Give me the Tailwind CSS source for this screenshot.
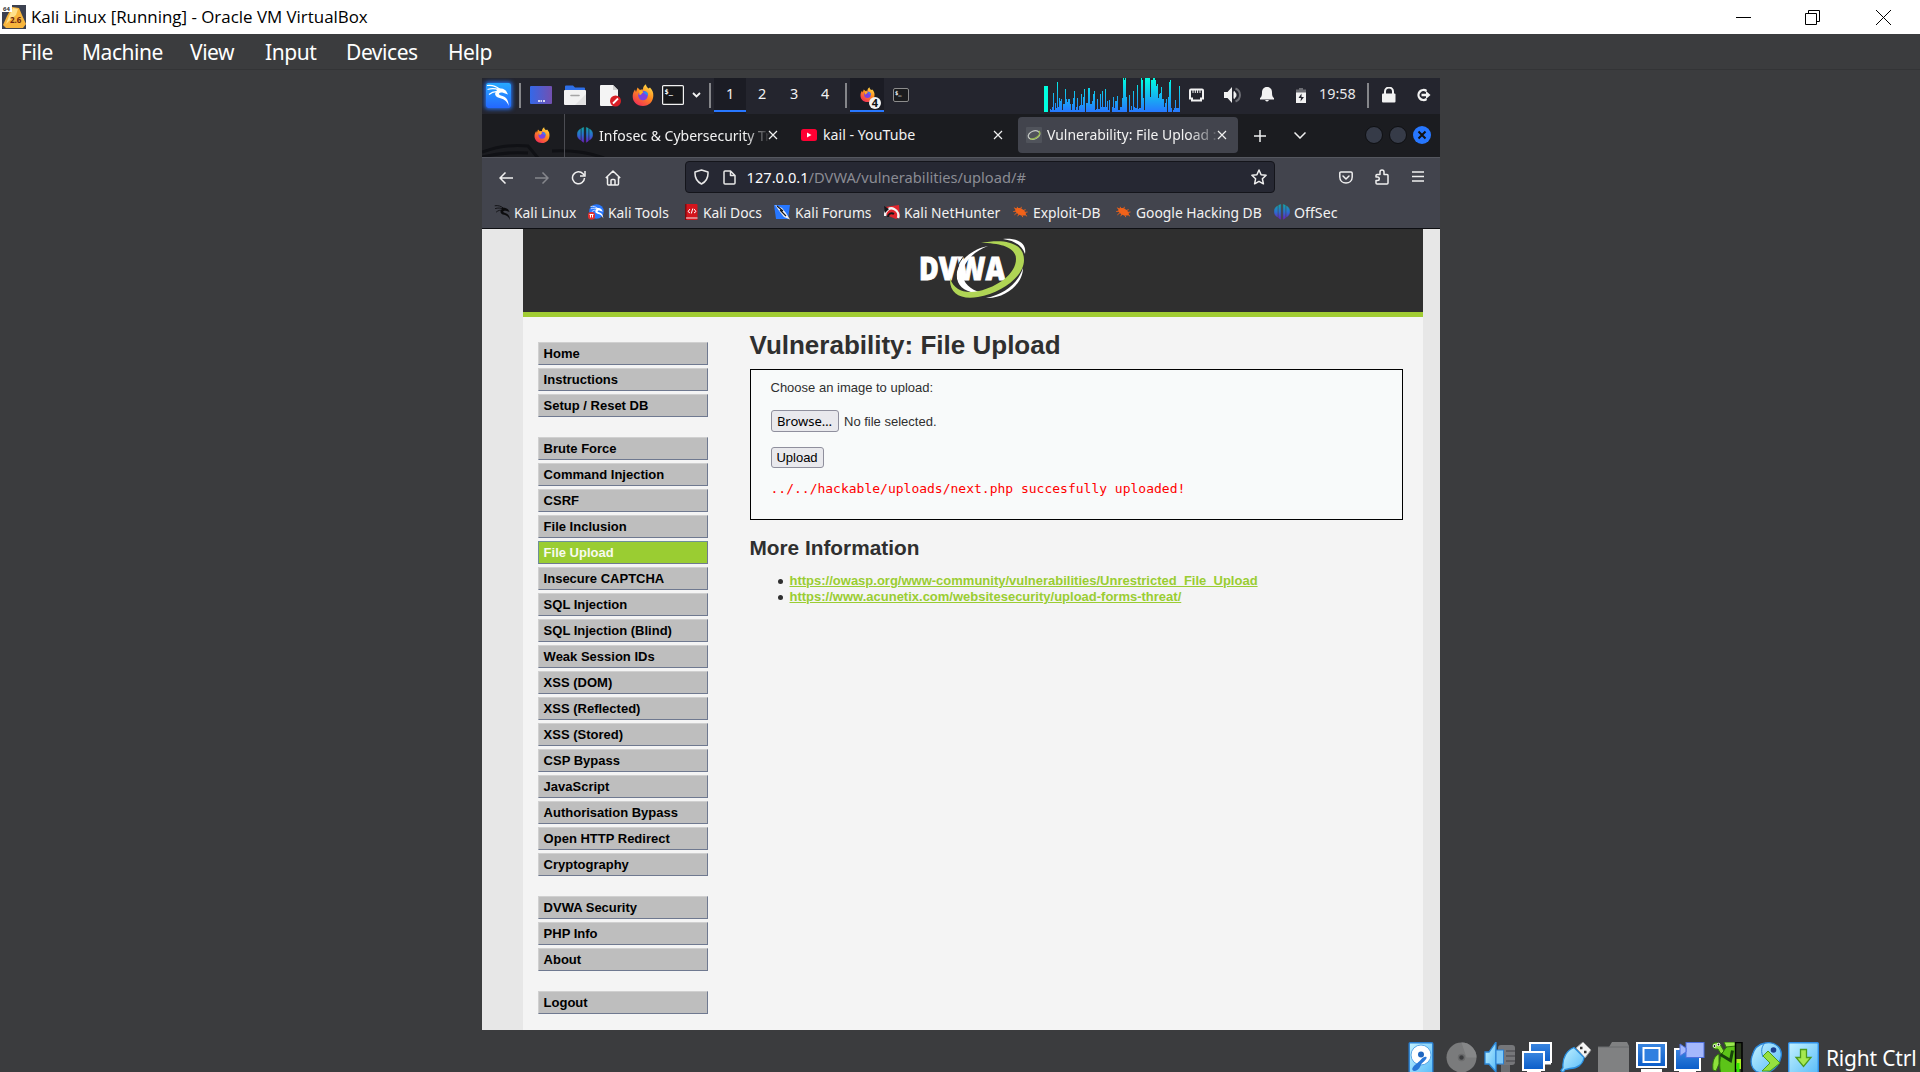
<!DOCTYPE html>
<html lang="en">
<head>
<meta charset="utf-8">
<title>Kali Linux [Running] - Oracle VM VirtualBox</title>
<script src="https://cdn.jsdelivr.net/npm/@tailwindcss/browser@4"></script>
</head>
<body class="bg-[#3b3c3e] w-[1920px] h-[1072px] overflow-hidden flex flex-col">

<svg width="0" height="0" class="absolute">
  <defs>
    <linearGradient id="fx" x1="0.8" y1="0" x2="0.2" y2="1"><stop offset="0" stop-color="#ffe14a"/><stop offset=".45" stop-color="#ff8a1e"/><stop offset="1" stop-color="#f0285a"/></linearGradient>
    <linearGradient id="off" x1="0" y1="0" x2="0" y2="1"><stop offset="0" stop-color="#12a5a8"/><stop offset=".5" stop-color="#2a6fd0"/><stop offset="1" stop-color="#6a1fc0"/></linearGradient>
    <linearGradient id="sky" x1="0" y1="0" x2="1" y2="1"><stop offset="0" stop-color="#c4f2ff"/><stop offset="1" stop-color="#56baf8"/></linearGradient>
    <linearGradient id="blu" x1="0" y1="0" x2="0" y2="1"><stop offset="0" stop-color="#3a86e0"/><stop offset="1" stop-color="#0a5cc8"/></linearGradient>
    <linearGradient id="desk" x1="0" y1="0" x2="1" y2="0"><stop offset="0" stop-color="#3468e8"/><stop offset="1" stop-color="#7350b0"/></linearGradient>
    <linearGradient id="kal" x1="0" y1="0" x2="0" y2="1"><stop offset="0" stop-color="#27a8ff"/><stop offset="1" stop-color="#2468ff"/></linearGradient>
    <linearGradient id="cpu" gradientUnits="userSpaceOnUse" x1="0" y1="0" x2="0" y2="34"><stop offset="0" stop-color="#00ffe0"/><stop offset="1" stop-color="#2777ff"/></linearGradient>
    <symbol id="firefox" viewBox="0 0 22 22">
      <path d="M11 22C4.500 22 .5 17.500.7 12c.1-3 1.300-5 2.300-6.500L4 8l1.500-4.500L8 6c1.500-.8 2.500-.5 3-.5C10.800 3.500 12 1.500 14 .3c0 2 1 2.700 2.500 4.200L18 3.500c2.500 2.500 3.500 5 3.300 8.500C21 17.800 17 22 11 22z" fill="url(#fx)"/>
      <circle cx="11" cy="11.500" r="4.800" fill="#7b42e0"/><path d="M7 7c2-1 4 0 4.500 1.500-2 0-1.500 2.500-4 2.500z" fill="#ffb01e"/><path d="M11.500 8c3-1.500 5 1 4.500 4-.8-1.500-3-1-4.500-4z" fill="#2a8df0"/>
    </symbol>
    <symbol id="dragon" viewBox="0 0 24 24">
      <path d="M1 2.500c5-.8 9 .5 12.500 3.500M1.500 6.500c4-1.200 8-1 11.500.4M3 11.500c3-2.500 6-3.300 9.500-2.500" fill="none" stroke="currentColor" stroke-width="1.200"/>
      <path d="M11 5.500c3.500-.5 7 .3 9 2.300l2 3.600-5-1.700c-3-.5-5 .8-3.500 2 1.500 1.100 4.500 1.200 6.500 3.300 1.800 1.900 2.500 4.500 2.800 8-1.800-4.500-4.300-6.800-8.300-7.700-4.500-1-7.200-4-4-7.300.8-.8-.5-1.500.5-2.500z" fill="currentColor"/>
    </symbol>
    <symbol id="offsec" viewBox="0 0 16 16">
      <path d="M3.500 2v11C1.500 12 .3 10 .3 7.500S1.500 3 3.500 2zM6.700.5v14.800L4.700 14V1.300zM9.300.5v14.800l2-1.300V1.300zM12.500 2v11c2-1 3.200-3 3.200-5.500S14.500 3 12.500 2z" fill="url(#off)" stroke="url(#off)" stroke-width=".5"/>
    </symbol>
    <symbol id="bug" viewBox="0 0 16 12">
      <path d="M2.500 2.500C5 1 8.500 1.500 10.800 3.500c2.200 1.900 3.500 4 2.800 5.700-2 1.200-5.800.6-8.300-1.200C3 6.500 1.800 4.400 2.500 2.500z" fill="#f0621a"/>
      <path d="M4 3L1 1.500M5 2.500L4.500.500M8 3l1-2.500M10.500 4.500l3-1M12 6.500l3.500-.5M12.500 8.500l2.500 2M9 8.500l1.500 3M6.500 8L5 10.500M4.500 6.500l-3 2.500M3.500 5L.3 5.500" stroke="#f0621a" stroke-width="1"/>
    </symbol>
    <symbol id="x" viewBox="0 0 10 10"><path d="M1 1l8 8M9 1l-8 8" stroke="#f0f0f0" stroke-width="1.200"/></symbol>
  </defs>
</svg>

<!-- Window title bar -->
<header class="h-[34px] bg-white flex items-center shrink-0">
  <svg class="ml-[2px] -mt-px shrink-0" width="24" height="24" viewBox="0 0 24 24">
    <rect width="24" height="24" fill="#3c4150"/>
    <path d="M10 2l7 1 3 7 4 9-3 4H4l-3-3 4-9z" fill="#f8b53c"/><path d="M11 3l5 1-2 6-7 6-3 3 3-8z" fill="#ffe08a"/>
    <rect width="10" height="7" fill="#fff"/>
    <text x="1" y="6" font-family="Open Sans" font-size="6" font-weight="700" fill="#333">64</text>
    <text x="8" y="18" font-family="Open Sans" font-size="8" font-weight="700" fill="#6b1f10">2.6</text>
  </svg>
  <span class="ml-[5px] w-[1701px] text-[16.900px] leading-[34px] text-black whitespace-nowrap font-['Open_Sans',sans-serif]">Kali Linux [Running] - Oracle VM VirtualBox</span>
  <svg class="ml-[4px] shrink-0" width="160" height="17" viewBox="0 0 160 17" fill="none" stroke="#000">
    <path d="M0 8.500h15"/><path d="M69.500 4.500h11v11h-11zM72.500 4.500v-3h11v11h-3"/><path d="M140 1l15 15M155 1l-15 15"/>
  </svg>
</header>

<!-- VirtualBox menu -->
<nav class="h-[36px] shrink-0 flex pl-[21px] text-[21px] tracking-[-0.45px] leading-[36px] text-white border-b border-[#333436] font-['Noto_Sans',sans-serif] whitespace-nowrap">
  <span class="w-[61px]">File</span><span class="w-[108px]">Machine</span><span class="w-[75px]">View</span><span class="w-[81px]">Input</span><span class="w-[102px]">Devices</span><span>Help</span>
</nav>

<!-- Guest screen -->
<main class="mt-[8px] ml-[482px] w-[958px] h-[952px] shrink-0 flex flex-col overflow-hidden font-['Noto_Sans',sans-serif] text-[14.667px] text-[#f2f2f2] whitespace-nowrap">

  <!-- Desktop panel -->
  <div class="h-[36px] shrink-0 bg-[#24252e] flex items-center text-[14.400px] leading-none">
    <div class="w-[37px] pl-[4px]"><div class="w-[25px] h-[25px] -mt-[2px] rounded-[2px] shadow-[0_0_4px_1px_#2777ff] text-white"><svg width="25" height="25" viewBox="0 0 25 25"><rect width="25" height="25" rx="2" fill="url(#kal)"/><use href="#dragon" width="24" height="24"/></svg></div></div>
    <div class="w-[11px]"><div class="w-[2px] h-[25px] -mt-[1px] bg-[#85868a]"></div></div>
    <div class="w-[34px]"><svg width="22" height="18" class="-mt-[2px]"><rect width="22" height="18" rx="1" fill="url(#desk)"/><path d="M8 15h2M10.500 15h1.500M13 15h2" stroke="#fff" stroke-width="1.500"/></svg></div>
    <div class="w-[36px]"><svg width="22" height="20" class="-mt-[2px]"><path d="M1 6V1.500Q1 .5 2 .5h7l2 2h9q1 0 1 1V7z" fill="#2e6fe8"/><rect y="5" width="22" height="15" rx="1" fill="#f2f2f2"/><path d="M22 9v11H11z" fill="#e2e2e2"/><path d="M7 10.500h8" stroke="#a5a5a5" stroke-width="1.600" stroke-linecap="round"/></svg></div>
    <div class="w-[32px]"><svg width="22" height="23" class="-mt-[1px]"><path d="M1 1h12l5 5v16H1q-1 0-1-1V2q0-1 1-1z" fill="#f4f4f4"/><path d="M13 1l5 5h-5z" fill="#cfcfcf"/><circle cx="15.500" cy="17" r="5.500" fill="#d81f26"/><path d="M13 19.500l5-5" stroke="#fff" stroke-width="1.800"/></svg></div>
    <div class="w-[30px]"><svg width="22" height="22" class="-mt-[2px]"><use href="#firefox" width="22" height="22"/></svg></div>
    <div class="w-[30px]"><svg width="22" height="20" class="-mt-[2px]"><rect x=".6" y=".6" width="20.800" height="18.800" rx="1" fill="#16171a" stroke="#f2f2f2" stroke-width="1.200"/><text x="2.500" y="9" font-family="DejaVu Sans Mono" font-size="7" font-weight="700" fill="#fff">$_</text></svg></div>
    <div class="w-[17px]"><svg width="9" height="6" class="-mt-[2px]"><path d="M1 1l3.500 3.500L8 1" fill="none" stroke="#f2f2f2" stroke-width="1.800"/></svg></div>
    <div class="w-[5px]"><div class="w-[2px] h-[25px] -mt-[1px] bg-[#85868a]"></div></div>
    <div class="w-[32px] h-full text-center bg-[#1b1c24]"><div class="h-[34px] leading-[32px] border-b-[2px] border-[#2777ff]">1</div></div>
    <div class="w-[32px] text-center pb-[4px]">2</div><div class="w-[32px] text-center pb-[4px]">3</div><div class="w-[35px] pl-[11px] pb-[4px]">4</div>
    <div class="w-[5px]"><div class="w-[2px] h-[25px] -mt-[1px] bg-[#85868a]"></div></div>
    <div class="w-[43px] h-full"><div class="w-[34px] h-[34px] bg-[#1b1c24] border-b-[2px] border-[#2777ff] pl-[10px] pt-[9px]"><svg width="22" height="22"><use href="#firefox" width="15" height="15"/><circle cx="15" cy="16" r="6" fill="#f2f2f2"/><text x="15" y="20" text-anchor="middle" font-size="11" font-weight="700" fill="#111">4</text></svg></div></div>
    <div class="w-[151px]"><svg width="16" height="15" class="-mt-[1px]"><rect x=".5" y=".5" width="15" height="13" rx="1.500" fill="#1a1b1d" stroke="#8d8d8d"/><text x="2" y="7" font-family="DejaVu Sans Mono" font-size="5.500" font-weight="700" fill="#fff">$_</text></svg></div>
    <div class="w-[145px] h-full"><svg width="136" height="34" shape-rendering="crispEdges"><path d="M0 8h4v26H0z" fill="#00ffe0"/><path id="bars" fill="url(#cpu)"/></svg></div>
    <div class="w-[35px]"><svg width="15" height="14" class="-mt-[3px]"><path d="M2 1.500h11q1 0 1 1v8h-2v2H3v-2H1v-8q0-1 1-1z" fill="none" stroke="#f2f2f2" stroke-width="2"/><path d="M4 2v3M6.300 2v3M8.600 2v3M11 2v3" stroke="#f2f2f2"/></svg></div>
    <div class="w-[36px]"><svg width="18" height="16" class="-mt-[3px]"><path d="M0 5h3.500L8 0v16l-4.500-5H0z" fill="#f2f2f2"/><path d="M10 4.500a4 4 0 010 7z" fill="#f2f2f2" stroke="#f2f2f2"/><path d="M11.500 1.500c6 2.500 6 10.500 0 13" fill="none" stroke="#6c6d73" stroke-width="2"/></svg></div>
    <div class="w-[36px]"><svg width="14" height="15" class="-mt-[3px]"><path d="M7 0c3.500 0 5 2.500 5 5.500 0 3 .5 4.500 2 5.500v1.500H0V11c1.500-1 2-2.500 2-5.500C2 2.500 3.500 0 7 0zM5 13h4q-2 3-4 0z" fill="#f2f2f2"/></svg></div>
    <div class="w-[22px]"><svg width="10" height="15" class="-mt-[2px]"><path d="M3 0h4v1.500h3V5H0V1.500h3z" fill="#6c6d73"/><path d="M0 4.500h10V15H0z" fill="#f2f2f2"/><path d="M5.500 5.500L2.500 10H5l-.5 3.500L8 9H5.500z" fill="#24252e"/></svg></div>
    <div class="w-[49px] pb-[3px] pl-px text-[#e8e8ea]">19:58</div>
    <div class="w-[15px]"><div class="w-[2px] h-[25px] -mt-[1px] bg-[#85868a]"></div></div>
    <div class="w-[34px]"><svg width="14" height="16" class="-mt-[3px]"><path d="M3 7V4.500a4 4 0 018 0V7" fill="none" stroke="#f2f2f2" stroke-width="2"/><rect y="6.500" width="13.500" height="9" rx="1" fill="#f2f2f2"/></svg></div>
    <svg width="15" height="14" class="-mt-[3px] shrink-0"><path d="M10.500 3a5 5 0 100 8" fill="none" stroke="#f2f2f2" stroke-width="2.300"/><path d="M5.500 5.800h4.500V3l4.500 4-4.500 4V8.200H5.500z" fill="#f2f2f2"/></svg>
  </div>

  <!-- Firefox tab strip -->
  <div class="h-[43px] shrink-0 bg-[#1b1c20] flex items-center relative text-[14px] [&_span]:-mt-px">
    <svg class="absolute left-0 top-0" width="140" height="43" fill="none" stroke="#101115" stroke-width="3"><path d="M0 38c14-5 28-8 46-6l10 12M0 43c16-4 30-5 46-4M70 37c20-1 36 1 52 7"/></svg>
    <div class="w-[83px] h-full pl-[52px] flex items-center border-r border-[#4b4c52] relative"><svg width="16" height="16" class="-mt-[2px]"><use href="#firefox" width="16" height="16"/></svg></div>
    <div class="w-[223px] pl-[12px] flex items-center relative">
      <svg width="16" height="16" class="-mt-px shrink-0"><use href="#offsec" width="16" height="16"/></svg>
      <span class="ml-[6px] w-[171px] [mask-image:linear-gradient(to_right,#000_146px,transparent_172px)]">Infosec &amp; Cybersecurity Tr</span>
      <svg width="10" height="10" class="-ml-[2px] -mt-px"><use href="#x" width="10" height="10"/></svg>
    </div>
    <div class="w-[230px] pl-[13px] flex items-center relative">
      <svg width="16" height="12" class="-mt-px shrink-0"><rect width="16" height="12" rx="2.500" fill="#ff0033"/><path d="M6 3.500v5l4.500-2.500z" fill="#fff"/></svg>
      <span class="ml-[6px] w-[170px] text-[14.200px]">kail - YouTube</span>
      <svg width="10" height="10" class="-mt-px"><use href="#x" width="10" height="10"/></svg>
    </div>
    <div class="w-[220px] h-[36px] -mt-[1px] pl-[8px] flex items-center rounded-[4px] bg-[#42444d] relative">
      <svg width="16" height="16" class="shrink-0"><rect width="16" height="16" rx="1" fill="#50535b"/><ellipse cx="8" cy="8" rx="6" ry="4" transform="rotate(-20 8 8)" fill="none" stroke="#c8ccc8" stroke-width="1.200"/><path d="M13 4c3 3-3 9-9 8" fill="none" stroke="#93b84a" stroke-width="1.300"/></svg>
      <span class="ml-[5px] w-[174px] pt-[2px] text-[13.950px] [mask-image:linear-gradient(to_right,#000_142px,transparent_174px)]">Vulnerability: File Upload :</span>
      <svg width="10" height="10" class="-ml-[4px]"><use href="#x" width="10" height="10"/></svg>
    </div>
    <svg class="ml-[16px] relative" width="12" height="12" stroke="#f0f0f0" stroke-width="1.500"><path d="M6 0v12M0 6h12"/></svg>
    <svg class="ml-[28px] -mt-px relative" width="12" height="7" fill="none" stroke="#f0f0f0" stroke-width="1.500"><path d="M.5.500L6 6 11.500.500"/></svg>
    <div class="ml-[59px] -mt-[1px] flex gap-[6px] relative">
      <div class="w-[18px] h-[18px] rounded-full bg-[#363b48] border border-[#0e0f12]"></div>
      <div class="w-[18px] h-[18px] rounded-full bg-[#363b48] border border-[#0e0f12]"></div>
      <div class="w-[18px] h-[18px] rounded-full bg-[#2777ff]"><svg width="18" height="18"><path d="M5.500 5.500l7 7M12.500 5.500l-7 7" stroke="#111" stroke-width="2"/></svg></div>
    </div>
  </div>

  <!-- Navigation bar -->
  <div class="h-[40px] shrink-0 bg-[#42444d] border-t border-[#55575f] flex items-center">
    <svg class="ml-[17px] shrink-0" width="14" height="12" fill="none" stroke="#f0f0f0" stroke-width="1.500"><path d="M14 6H1M6.500.500L1 6l5.500 5.500"/></svg>
    <svg class="ml-[22px] shrink-0" width="14" height="12" fill="none" stroke="#85868c" stroke-width="1.500"><path d="M0 6h13M7.500.500L13 6l-5.500 5.500"/></svg>
    <svg class="ml-[22px] shrink-0" width="15" height="15" fill="none" stroke="#f0f0f0" stroke-width="1.500"><path d="M13.500 8A6 6 0 1 1 12 3.800L13.500 5.500"/><path d="M14 1v5H9"/></svg>
    <svg class="ml-[19px] shrink-0" width="16" height="16" fill="none" stroke="#f0f0f0" stroke-width="1.500" stroke-linejoin="round"><path d="M.8 8L8 1l7.200 7M2.500 7v7q0 1 1 1h9q1 0 1-1V7M6 15v-4.500q0-1 1-1h2q1 0 1 1V15"/></svg>
    <div class="ml-[64px] w-[590px] h-[32px] -mt-px rounded-[4px] bg-[#262833] border border-[#14151b] flex items-center shrink-0">
      <svg class="ml-[8px]" width="15" height="16" fill="none" stroke="#e8e8e8" stroke-width="1.500" stroke-linejoin="round"><path d="M7.500 1L14 3c.3 5-1.500 9.500-6.500 12C2.500 12.500.7 8 1 3z"/></svg>
      <svg class="ml-[14px]" width="13" height="15" fill="none" stroke="#e8e8e8" stroke-width="1.500" stroke-linejoin="round"><path d="M2 1h5.500L12 5.500V13q0 1-1 1H2q-1 0-1-1V2q0-1 1-1zM7.500 1v4.500H12"/></svg>
      <span class="ml-[10.500px] w-[504.500px] text-[#8b8c94]"><span class="text-[#fbfbfe]">127.0.0.1</span>/DVWA/vulnerabilities/upload/#</span>
      <svg width="16" height="16" viewBox="0 0 16 16" fill="none" stroke="#f0f0f0" stroke-width="1.500" stroke-linejoin="round"><path d="M8 1l2.100 4.700 5 .6-3.700 3.500 1 5L8 12.300l-4.400 2.500 1-5L.9 6.300l5-.6z"/></svg>
    </div>
    <svg class="ml-[64px] -mt-px" width="14" height="13" fill="none" stroke="#f0f0f0" stroke-width="1.500" stroke-linecap="round" stroke-linejoin="round"><path d="M2 1h10q1.200 0 1.200 1.200V6c0 8-12.400 8-12.400 0V2.200Q.8 1 2 1zM4 5l3 3 3-3"/></svg>
    <svg class="ml-[22px] -mt-px" width="15" height="16" fill="none" stroke="#f0f0f0" stroke-width="1.500" stroke-linejoin="round"><path d="M2 15h10q1 0 1-1V6.500q0-1-1-1H9V3a2 2 0 00-4 0v2.500H2q-1 0-1 1V8h1.500a1.700 1.700 0 010 3.500H1V14q0 1 1 1z"/></svg>
    <svg class="ml-[22px] -mt-[2px]" width="12" height="11" stroke="#f0f0f0" stroke-width="1.300"><path d="M0 1h12M0 5.500h12M0 10h12"/></svg>
  </div>

  <!-- Bookmarks toolbar -->
  <div class="h-[32px] shrink-0 bg-[#42444d] border-b border-[#0e0f13] flex items-center text-[13.850px] [&>div]:flex [&>div]:items-center [&>div]:shrink-0 [&_span]:mt-px">
    <div class="ml-[12px] w-[94px]"><svg width="17" height="17" class="text-[#0c0c0e]"><use href="#dragon" width="17" height="17"/></svg><span class="ml-[3px]">Kali Linux</span></div>
    <div class="w-[97px]"><svg width="16" height="16" class="text-white"><circle cx="8.500" cy="7.500" r="7.300" fill="#2777ff"/><use href="#dragon" x="2" y="1" width="14" height="14"/><rect y="8" width="7" height="7.500" rx="3" fill="#e03030"/><path d="M1.500 10.500h4M2.500 10.500v3M4.500 10.500v3" stroke="#fff"/></svg><span class="ml-[4px]">Kali Tools</span></div>
    <div class="w-[89px]"><svg width="13" height="16"><rect width="12.500" height="16" rx="1" fill="#d4141c"/><path d="M0 0h1.500v16H0z" fill="#7a0c10"/><path d="M1 14h11.500" stroke="#eee"/><path d="M5 5L3 7.500 5 9M9 5l2 2.500L9 9M7.800 4.500L6.300 9.500" fill="none" stroke="#fff"/></svg><span class="ml-[5px]">Kali Docs</span></div>
    <div class="w-[110px]"><svg width="17" height="16"><path d="M0 1h16l-2 14H2z" fill="#2777ff"/><path d="M1 1l7 3 4 5 4 6.500-6-2.500-4-5z" fill="#f2f2f2"/><path d="M3 2l6 5M6 6l6 6" stroke="#15161a" stroke-width="1.200"/></svg><span class="ml-[4px]">Kali Forums</span></div>
    <div class="w-[129px]"><svg width="16" height="16"><path d="M1 3L15 1l1 12-4 2-10-4z" fill="#e0242c"/><path d="M1 12C1 6 6 3 10 5s5 6 4 9" fill="none" stroke="#f4f4f4" stroke-width="2.500"/><path d="M4 13c0-3 3-5 6-3" fill="none" stroke="#16171a" stroke-width="2"/><path d="M0 2l5 3-4 4z" fill="#16171a"/></svg><span class="ml-[4px]">Kali NetHunter</span></div>
    <div class="w-[103px]"><svg width="15" height="12"><use href="#bug" width="15" height="12"/></svg><span class="ml-[5px]">Exploit-DB</span></div>
    <div class="w-[158px]"><svg width="15" height="12"><use href="#bug" width="15" height="12"/></svg><span class="ml-[5px]">Google Hacking DB</span></div>
    <div><svg width="16" height="16"><use href="#offsec" width="16" height="16"/></svg><span class="ml-[4px] text-[14.200px]">OffSec</span></div>
  </div>

  <!-- DVWA page -->
  <div class="flex-1 bg-[#e7e7e7] pl-[41px] pr-[17px] flex font-['Liberation_Sans',Arial,sans-serif] text-[13px] text-[#2f2f2f]">
    <div class="w-[900px] bg-[#f4f4f4] flex flex-col">
      <div class="h-[88px] shrink-0 bg-[#2f2f2f] border-b-[5px] border-[#a1cc33] flex">
        <svg class="ml-[392px] mt-[7px]" width="118" height="64" viewBox="0 0 118 64">
          <path d="M73 10C54 17 44 33 49 44c4 9 16 14 27 13-14 2-29-1-33-11C37 32 52 14 73 10z" fill="#fff"/>
          <text x="4" y="44" font-family="Open Sans" font-size="32.500" font-weight="800" fill="#fff" stroke="#fff" stroke-width=".9" textLength="86" lengthAdjust="spacingAndGlyphs">DVWA</text>
          <path d="M50 19C43 27 39 36 42 46" fill="none" stroke="#2f2f2f" stroke-width="1"/>
          <path d="M66 7c24-5 43 0 43 17 0 17-23 33-46 37-17 3-29-3-28-19 4 13 16 16 29 13 18-4 37-17 37-32C101 11 85 7 66 7z" fill="#b0d555"/>
          <path d="M88 3c13-1 24 3 22 15-3-8-9-13-22-15zM108 32c0 16-18 31-37 30 19-4 32-15 37-30z" fill="#fff"/>
        </svg>
      </div>
      <div class="flex">
        <ul class="pt-[25px] ml-[15px] w-[170px] shrink-0 flex flex-col gap-[20px] font-bold text-black [&_ul]:flex [&_ul]:flex-col [&_ul]:gap-[3px] [&_li_li]:h-[23px] [&_li_li]:pl-[4.600px] [&_li_li]:leading-[21px] [&_li_li]:border [&_li_li]:border-t-[#d0d0d0] [&_li_li]:border-l-[#d0d0d0] [&_li_li]:border-r-[#6f7990] [&_li_li]:border-b-[#6f7990]">
          <li><ul><li class="bg-[#bebebe]">Home</li><li class="bg-[#bebebe]">Instructions</li><li class="bg-[#bebebe]">Setup / Reset DB</li></ul></li>
          <li><ul><li class="bg-[#bebebe]">Brute Force</li><li class="bg-[#bebebe]">Command Injection</li><li class="bg-[#bebebe]">CSRF</li><li class="bg-[#bebebe]">File Inclusion</li><li class="bg-[#9acd32] text-[#f8faf0] border-t-[#6f8f9a]! border-l-[#6f8f9a]!">File Upload</li><li class="bg-[#bebebe]">Insecure CAPTCHA</li><li class="bg-[#bebebe]">SQL Injection</li><li class="bg-[#bebebe]">SQL Injection (Blind)</li><li class="bg-[#bebebe]">Weak Session IDs</li><li class="bg-[#bebebe]">XSS (DOM)</li><li class="bg-[#bebebe]">XSS (Reflected)</li><li class="bg-[#bebebe]">XSS (Stored)</li><li class="bg-[#bebebe]">CSP Bypass</li><li class="bg-[#bebebe]">JavaScript</li><li class="bg-[#bebebe]">Authorisation Bypass</li><li class="bg-[#bebebe]">Open HTTP Redirect</li><li class="bg-[#bebebe]">Cryptography</li></ul></li>
          <li><ul><li class="bg-[#bebebe]">DVWA Security</li><li class="bg-[#bebebe]">PHP Info</li><li class="bg-[#bebebe]">About</li></ul></li>
          <li><ul><li class="bg-[#bebebe]">Logout</li></ul></li>
        </ul>
        <div class="ml-[41.500px] w-[653.500px] pt-[13px]">
          <h1 class="text-[26px] font-bold leading-[30px]">Vulnerability: File Upload</h1>
          <div class="mt-[9px] h-[151px] border border-black bg-[#f8fafa] pl-[20px] pt-[10px]">
            <p class="leading-[16px]">Choose an image to upload:</p>
            <div class="mt-[14px] flex items-center gap-[5px]">
              <button class="w-[68px] h-[22px] border border-[#8f8f9d] rounded-[3px] bg-[#e9e9ed] text-black font-['Noto_Sans',sans-serif] text-[13px] leading-[20px]">Browse…</button>
              <span class="pt-[2px] pl-[0.5px]">No file selected.</span>
            </div>
            <button class="block mt-[15px] w-[53px] h-[21px] border border-[#8f8f9d] rounded-[3px] bg-[#e9e9ed] text-black leading-[19px]">Upload</button>
            <pre class="mt-[13px] font-['DejaVu_Sans_Mono',monospace] text-[13px] leading-[16px] text-[#ff0000]">../../hackable/uploads/next.php succesfully uploaded!</pre>
          </div>
          <h2 class="mt-[16px] text-[20.800px] leading-[24px] font-bold">More Information</h2>
          <ul class="mt-[13px] pl-[28.500px] font-bold leading-[16px] text-[#9acd32] [&>li]:flex [&>li]:items-center">
            <li><i class="size-[5px] rounded-full bg-[#2f2f2f] mr-[6.500px]"></i><a class="underline">https://owasp.org/www-community/vulnerabilities/Unrestricted_File_Upload</a></li>
            <li><i class="size-[5px] rounded-full bg-[#2f2f2f] mr-[6.500px]"></i><a class="underline">https://www.acunetix.com/websitesecurity/upload-forms-threat/</a></li>
          </ul>
        </div>
      </div>
    </div>
  </div>
</main>

<!-- VirtualBox status bar -->
<footer class="h-[42px] shrink-0 pt-[12px] pl-[1408px] flex overflow-hidden">
  <div class="flex shrink-0 [&>div]:w-[38px] [&>div]:h-[30px] [&>div]:overflow-hidden">
    <div><svg width="26" height="32" viewBox="0 0 25 32"><rect x=".7" y=".7" width="23.600" height="33" rx="1" fill="url(#sky)" stroke="#2a7fd0" stroke-width="1.400"/><circle cx="12.500" cy="13" r="10" fill="#fff" stroke="#5aa8e8"/><circle cx="12.500" cy="12.500" r="3" fill="#1f66c0"/><path d="M18 15c1 3-5 5-6 9-2 5-7 6-8 4s2-5 5-7 5-7 9-6z" fill="#2a78d8"/></svg></div>
    <div><svg width="32" height="32"><circle cx="15.500" cy="15.500" r="15" fill="#7a7b7c"/><path d="M15.500.500a15 15 0 0115 15h-10z" fill="#868788"/><circle cx="15.500" cy="15.500" r="3" fill="#3b3c3e" stroke="#6a6b6c" stroke-width="1.500"/></svg></div>
    <div><svg width="32" height="32"><rect x="14" y="3" width="17" height="20" rx="3" fill="#76777a"/><path d="M17 23h9v8h-9z" fill="#6c6d70"/><path d="M22 9h9M22 14h9M22 19h9" stroke="#55565a" stroke-width="1.500"/><path d="M1 10h4L12 0v30L5 22H1z" fill="url(#sky)" stroke="#2a86d8" stroke-width="1.300"/><rect x="12" y="8" width="7.500" height="14" fill="#7cc8f8" stroke="#2a7fd0"/></svg></div>
    <div><svg width="32" height="32"><path d="M8 1h21v19H8z" fill="url(#blu)" stroke="#fff" stroke-width="2"/><path d="M1 10h21v18H1z" fill="url(#blu)" stroke="#fff" stroke-width="2"/><path d="M5 29.500h14M23 21.500h6" stroke="#fff" stroke-width="2"/></svg></div>
    <div><svg width="32" height="32"><path d="M16 6l7-6 8 8-6 8z" fill="#f5f5f5" stroke="#9a9a9a"/><path d="M20 6h2.500M24 10h2.500" stroke="#333" stroke-width="2.500"/><path d="M14 5.500l10 10c-1 7-7 11-14 11l-5 1-2 3-2-2 2-3C2 16 7 8 14 5.500z" fill="url(#sky)" stroke="#2a8fe0" stroke-width="1.300"/></svg></div>
    <div><svg width="32" height="32"><path d="M0 5h11l3-5h15l2 4v28H0z" fill="#808182"/><path d="M0 5h31" stroke="#6b6c6e"/></svg></div>
    <div><svg width="32" height="32"><path d="M1 1h29v24H1z" fill="url(#blu)" stroke="#fff" stroke-width="2"/><path d="M7.500 6h16v14h-16z" fill="#2f7fe0" stroke="#fff" stroke-width="2"/><path d="M5 28.500h21" stroke="#fff" stroke-width="3"/></svg></div>
    <div><svg width="32" height="32"><path d="M1 7h25v21H1z" fill="url(#blu)" stroke="#fff" stroke-width="2"/><rect x="12" y=".5" width="18" height="15" fill="#a5b8fc" stroke="#4d6fe0"/><path d="M12 6L6 2v12l6-4z" fill="#a5b8fc" stroke="#4d6fe0"/><path d="M5 29.500h17" stroke="#fff" stroke-width="2"/></svg></div>
    <div><svg width="32" height="32"><path d="M8 27c-1-9 1-17 8-23l10-3v28l-5 3H9z" fill="#5cc418" stroke="#2f7a08"/><path d="M12 0h12v4l-10 1z" fill="#9be850" stroke="#2f7a08"/><path d="M1 2C3 0 8 0 9 4l3 5-3 3-3-5H3C1 6 0 4 1 2zM7 12c-5 2-7 8-6 16l3 1 3-7z" fill="#8ee03c" stroke="#2f7a08"/><circle cx="2.500" cy="4" r="1.800" fill="#fff"/><circle cx="6.500" cy="2.500" r="1.800" fill="#fff"/><circle cx="2.500" cy="4" r=".9" fill="#111"/><circle cx="6.500" cy="2.500" r=".9" fill="#111"/><path d="M8.500 12.500l10 6 2-10" fill="none" stroke="#17420a" stroke-width="3"/><rect x="23.500" y=".5" width="6.500" height="31" fill="#2c3a20" stroke="#000" stroke-width="1.500"/><path d="M24.500 17H29v10h-4.500z" fill="#a8f020"/><path d="M24.500 21h3v9h-3z" fill="#2fe800"/></svg></div>
    <div><svg width="33" height="32"><path d="M15 1c10-2 18 5 16 14-2 10-10 16-18 16C4 31-1 24 2 14 4 6 9 2 15 1z" fill="url(#sky)" stroke="#2a86d8" stroke-width="1.300"/><path d="M15 1c-4 4-4 9-2 14" fill="none" stroke="#2a86d8"/><circle cx="23.500" cy="8" r="2.800" fill="#1c3f90"/><path d="M18 9l12 12-10 8h-8l8-8-7-7z" fill="#96e040" stroke="#4a9a18"/></svg></div>
    <div><svg width="32" height="32"><rect x=".7" y=".7" width="29.600" height="33" rx="1" fill="url(#sky)" stroke="#2f8fe8" stroke-width="1.400"/><path d="M12.500 7.500h6v8h4.500l-7.500 9-7.500-9h4.500z" fill="#a5e850" stroke="#4c9a1c" stroke-width="1.300"/></svg></div>
  </div>
  <span class="text-[21px] tracking-[-0.200px] leading-[32px] text-white font-['Noto_Sans',sans-serif] whitespace-nowrap">Right Ctrl</span>
</footer>

<script>
  // CPU load history: one value per pixel column
  const load = [3,2,5,19,2,9,4,30,5,14,11,13,2,8,8,23,13,10,13,13,8,2,8,14,21,2,5,14,2,6,7,18,7,15,23,0,9,9,24,24,8,8,11,18,21,2,3,13,3,3,18,5,21,5,5,23,5,11,2,12,
    0,0,5,15,4,11,11,16,2,2,5,5,14,34,32,34,15,0,0,17,2,6,2,21,5,4,4,27,3,4,4,34,32,14,2,34,34,34,34,34,15,32,32,34,34,32,26,28,14,18,19,25,13,13,5,9,13,0,15,30,32,4,0,2,4,12,4,4,4,26];
  document.getElementById('bars').setAttribute('d', load.map((v, i) => v ? `M${i + 6} 34v-${v}h1v${v}z` : '').join(''));
</script>
</body>
</html>
